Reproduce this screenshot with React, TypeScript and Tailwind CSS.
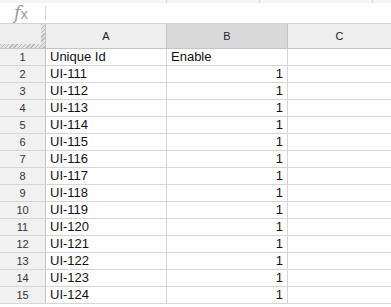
const rows = [
    { id: 1, a: 'Unique Id', b: 'Enable', num: false },
    ...Array.from({ length: 14 }, (_, i) => ({ id: i + 2, a: `UI-${111 + i}`, b: '1', num: true })),
];

const hatch = 'bg-[repeating-linear-gradient(135deg,#b8b8b8_0px,#b8b8b8_1px,#e4e4e4_1px,#e4e4e4_3px)]';

const App = () => {
    return (
        <div className="w-[391px] h-[307px] overflow-hidden bg-white font-['Liberation_Sans',Arial,sans-serif] text-[#111]">
            {/* toolbar remnant */}
            <div className="flex h-[3px] bg-[#f5f5f5]">
                <div className="w-[167px] border-r border-[#dadada]" />
                <div className="w-[93px] border-r border-[#dadada]" />
                <div className="w-[113px] border-r border-[#dadada]" />
            </div>

            {/* formula bar */}
            <div className="flex items-center h-[21px] border-b border-[#d4d4d4]">
                <span className="w-[45px] pl-[14px] text-[18px] italic text-[#9a9a9a] font-['DejaVu_Serif',serif] leading-none">
                    f<span className="text-[14px] not-italic font-['Liberation_Sans',sans-serif]">x</span>
                </span>
                <div className="h-[14px] border-l border-[#d8d8d8]" />
            </div>

            {/* column headers */}
            <div className="flex h-[25px] border-b border-[#c4c4c4] text-[11px] text-[#222]">
                <div className="relative w-[46px] bg-[#eeeeee] border-r border-[#c4c4c4]">
                    <div className={`absolute right-0 top-0 bottom-0 w-[4px] ${hatch}`} />
                    <div className={`absolute left-0 right-0 bottom-0 h-[4px] ${hatch}`} />
                </div>
                <div className="w-[121px] flex items-center justify-center bg-[#eeeeee] border-r border-[#c4c4c4]">A</div>
                <div className="w-[121px] flex items-center justify-center bg-[#dadada] border-r border-[#c4c4c4]">B</div>
                <div className="flex-1 flex items-center justify-center bg-[#eeeeee]">C</div>
            </div>

            {/* data rows */}
            {rows.map(row => (
                <div key={row.id} className="flex h-[17px] border-b border-[#d6d6d6] text-[13px] leading-[16px]">
                    <div className="w-[46px] flex items-center justify-center bg-[#f1f1f1] border-r border-[#c4c4c4] text-[11px] text-[#333]">
                        {row.id}
                    </div>
                    <div className="w-[121px] pl-[4px] border-r border-[#d6d6d6]">{row.a}</div>
                    <div className={`w-[121px] px-[4px] border-r border-[#d6d6d6] ${row.num ? 'text-right' : ''}`}>{row.b}</div>
                    <div className="flex-1" />
                </div>
            ))}
        </div>
    );
};

export default App;
